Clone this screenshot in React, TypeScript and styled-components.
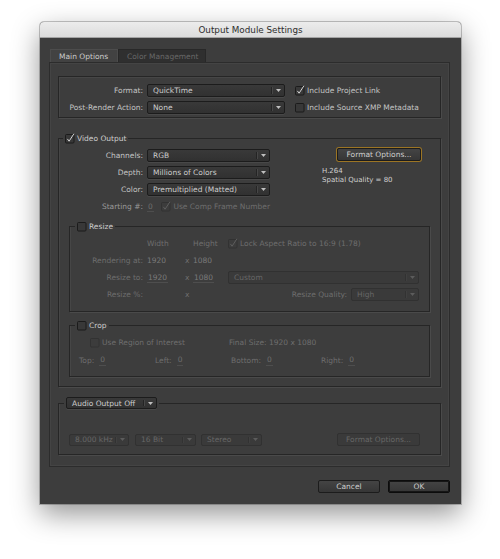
import React from 'react'
import styled, { createGlobalStyle } from 'styled-components'

const GlobalStyle = createGlobalStyle`
  html, body {
    margin: 0;
    padding: 0;
    background: #fff;
  }
  body {
    font-family: 'DejaVu Sans', 'Liberation Sans', sans-serif;
    font-size: 7.5px;
  }
`

const LABEL = '#c4c4c4'
const DIM = '#6e6e6e'

// ---------- small parts ----------

const CheckSvg = styled.svg`
  flex: none;
  display: block;
`

const CheckBox = ({ checked, disabled }: { checked?: boolean; disabled?: boolean }) => (
  <CheckSvg width="10" height="11" viewBox="0 0 10 11">
    <rect
      x="0.5"
      y="1.5"
      width="8.5"
      height="8.5"
      rx="1"
      fill={disabled ? '#3c3c3c' : '#383838'}
      stroke={disabled ? '#323232' : '#1b1b1b'}
    />
    {checked && (
      <path
        d="M2.4 5.9 L4.1 8.2 L8.9 0.8"
        fill="none"
        stroke={disabled ? '#5e5e5e' : '#d4d4d4'}
        strokeWidth="1"
      />
    )}
  </CheckSvg>
)

const CheckItem = styled.div<{ $disabled?: boolean; $width?: number }>`
  display: flex;
  align-items: center;
  gap: 2px;
  height: 13px;
  white-space: nowrap;
  color: ${p => (p.$disabled ? DIM : LABEL)};
  ${p => (p.$width ? `width: ${p.$width}px;` : '')}
`

const SelectBox = styled.div<{ $width: number; $height: number; $disabled?: boolean }>`
  display: flex;
  align-items: stretch;
  box-sizing: border-box;
  width: ${p => p.$width}px;
  height: ${p => p.$height}px;
  border: 1px solid ${p => (p.$disabled ? '#313131' : '#1c1c1c')};
  border-radius: 2px;
  background: ${p => (p.$disabled ? '#3a3a3a' : 'linear-gradient(#393939, #313131)')};
  color: ${p => (p.$disabled ? '#676767' : '#cdcdcd')};
  box-shadow: ${p => (p.$disabled ? 'none' : '0 1px 0 rgba(255,255,255,0.06)')};
`

const SelectText = styled.span`
  flex: 1;
  padding-left: 5px;
  display: flex;
  align-items: center;
  white-space: nowrap;
  overflow: hidden;
`

const SelectArrow = styled.span<{ $disabled?: boolean }>`
  flex: none;
  width: 12px;
  margin: 2px 0;
  display: flex;
  align-items: center;
  justify-content: center;
  border-left: 1px solid ${p => (p.$disabled ? '#323232' : '#242424')};
  box-shadow: inset 1px 0 0 ${p => (p.$disabled ? '#404040' : '#474747')};
`

type SelectProps = { value: string; width: number; height?: number; disabled?: boolean }

const Select = ({ value, width, height = 13, disabled }: SelectProps) => (
  <SelectBox $width={width} $height={height} $disabled={disabled}>
    <SelectText>{value}</SelectText>
    <SelectArrow $disabled={disabled}>
      <svg width="5" height="3" viewBox="0 0 5 3">
        <path d="M0 0h5L2.5 3z" fill={disabled ? '#5c5c5c' : '#c0c0c0'} />
      </svg>
    </SelectArrow>
  </SelectBox>
)

const Button = styled.div<{ $width: number; $focus?: boolean; $default?: boolean; $disabled?: boolean }>`
  box-sizing: border-box;
  width: ${p => p.$width}px;
  height: 13px;
  display: flex;
  align-items: center;
  justify-content: center;
  border: 1px solid ${p => (p.$default ? '#0c0c0c' : p.$disabled ? '#313131' : '#1c1c1c')};
  border-radius: 2px;
  background: ${p => (p.$disabled ? '#3a3a3a' : 'linear-gradient(#444, #363636)')};
  color: ${p => (p.$disabled ? '#676767' : '#cecece')};
  white-space: nowrap;
  box-shadow: ${p =>
    p.$focus
      ? '0 0 0 1px #9c7524'
      : p.$default
      ? 'inset 0 0 0 1px #161616'
      : 'none'};
`

const Value = styled.span<{ $underline?: boolean; $bright?: boolean }>`
  color: ${p => (p.$bright ? '#7a7a7a' : DIM)};
  ${p => (p.$underline ? 'border-bottom: 1px solid #4e4e4e; padding: 0 1px;' : '')}
  line-height: 10px;
`

// ---------- window ----------

const Page = styled.div`
  width: 500px;
  height: 559px;
  box-sizing: border-box;
  padding: 22px 0 0 40px;
  background: #fff;
  overflow: hidden;
`

const Dialog = styled.div`
  width: 421px;
  border-radius: 4px 4px 0 0;
  background: #3d3d3d;
  box-shadow: 0 10px 28px rgba(0, 0, 0, 0.42), 0 0 0 1px rgba(0, 0, 0, 0.22);
`

const TitleBar = styled.div`
  height: 16px;
  display: flex;
  align-items: center;
  justify-content: center;
  border-radius: 4px 4px 0 0;
  background: linear-gradient(#ececec, #dcdcdc);
  border-bottom: 1px solid #a4a4a4;
  box-sizing: border-box;
  color: #2e2e2e;
  font-size: 8.8px;
`

const Body = styled.div`
  padding: 11px 11px 11px 9px;
`

const TabRow = styled.div`
  display: flex;
  padding-left: 1px;
  height: 13px;
`

const Tab = styled.div<{ $active?: boolean; $width: number }>`
  box-sizing: border-box;
  width: ${p => p.$width}px;
  height: 13px;
  display: flex;
  align-items: center;
  padding-left: 8px;
  white-space: nowrap;
  color: ${p => (p.$active ? '#cccccc' : '#686868')};
  background: ${p => (p.$active ? '#424242' : '#2f2f2f')};
  border: 1px solid ${p => (p.$active ? '#4c4c4c' : '#282828')};
  border-bottom: none;
`

const TabPanel = styled.div`
  border: 1px solid #2c2c2c;
  box-shadow: inset 0 0 0 1px rgba(255, 255, 255, 0.04);
  padding: 13px 8px 11px;
`

const Box = styled.div`
  border: 1px solid #262626;
  box-shadow: 1px 1px 0 rgba(255, 255, 255, 0.07), inset 1px 1px 0 rgba(255, 255, 255, 0.05);
`

const FormatGrid = styled.div`
  display: grid;
  grid-template-columns: 88px 138px auto;
  grid-auto-rows: 13px;
  row-gap: 4px;
  align-items: center;
  padding: 7px 0 3px;
`

const Label = styled.span<{ $dim?: boolean; $color?: string }>`
  text-align: right;
  padding-right: 4px;
  white-space: nowrap;
  color: ${p => p.$color ?? (p.$dim ? DIM : LABEL)};
`

const CheckCell = styled.div`
  padding-left: 10px;
`

const Group = styled.fieldset<{ $mt: number; $mx?: number }>`
  margin: ${p => p.$mt}px ${p => p.$mx ?? 0}px 0;
  padding: 0;
  min-width: 0;
  border: 1px solid #262626;
  box-shadow: 1px 1px 0 rgba(255, 255, 255, 0.07), inset 1px 0 0 rgba(255, 255, 255, 0.05);
`

const Legend = styled.legend<{ $ml: number }>`
  margin-left: ${p => p.$ml}px;
  padding: 0 2px;
  height: 11px;
  display: flex;
  align-items: center;
  gap: 2px;
  color: #cdcdcd;
  white-space: nowrap;
`

const AudioLegend = styled.legend`
  margin-left: 5px;
  padding: 0 2px;
  height: 12px;
`

const VideoContent = styled.div`
  padding: 5px 0 9px;
`

const VideoTop = styled.div`
  display: flex;
`

const VideoGrid = styled.div`
  display: grid;
  grid-template-columns: 88px 123px;
  grid-auto-rows: 13px;
  row-gap: 4px;
  align-items: center;
`

const StartCell = styled.div`
  display: flex;
  align-items: center;
`

const StartValue = styled.div`
  width: 46px;
`

const InfoColumn = styled.div`
  margin-left: auto;
  margin-right: 19px;
  width: 99px;
  display: flex;
  flex-direction: column;
  align-items: flex-end;
`

const Info = styled.div`
  align-self: flex-start;
  margin-top: 6px;
  color: #d0d0d0;
  font-size: 7px;
  line-height: 9px;
  white-space: nowrap;
`

const ResizeGrid = styled.div`
  display: grid;
  grid-template-columns: 77px 38px 8px 35px 1fr;
  grid-auto-rows: 13px;
  row-gap: 4px;
  align-items: center;
  padding: 5px 10px 10px 0;
  color: ${DIM};
`

const RightCell = styled.div`
  display: flex;
  align-items: center;
  justify-content: flex-end;
  gap: 4px;
  color: ${DIM};
  white-space: nowrap;
`

const CropContent = styled.div`
  padding: 5px 0 9px 9px;
  display: flex;
  flex-direction: column;
  gap: 5px;
  color: ${DIM};
`

const CropRow = styled.div<{ $indent?: number }>`
  display: flex;
  align-items: center;
  height: 13px;
  padding-left: ${p => p.$indent ?? 0}px;
  white-space: nowrap;
`

const CropField = styled.div<{ $width?: number }>`
  display: flex;
  align-items: center;
  gap: 5px;
  ${p => (p.$width ? `width: ${p.$width}px;` : '')}
`

const AudioRow = styled.div`
  display: flex;
  align-items: center;
  padding: 24px 20px 8px 10px;
`

const AudioSelects = styled.div`
  display: flex;
  gap: 5px;
  & > :first-child {
    margin-right: 1px;
  }
`

const ButtonRow = styled.div`
  display: flex;
  justify-content: flex-end;
  gap: 8px;
  margin-top: 13px;
`

const Spacer = styled.div`
  flex: 1;
`

export default function App() {
  return (
    <Page>
      <GlobalStyle />
      <Dialog>
        <TitleBar>Output Module Settings</TitleBar>
        <Body>
          <TabRow>
            <Tab $active $width={68}>Main Options</Tab>
            <Tab $width={88}>Color Management</Tab>
          </TabRow>
          <TabPanel>
            <Box>
              <FormatGrid>
                <Label>Format:</Label>
                <Select value="QuickTime" width={138} />
                <CheckCell>
                  <CheckItem>
                    <CheckBox checked />
                    Include Project Link
                  </CheckItem>
                </CheckCell>
                <Label>Post-Render Action:</Label>
                <Select value="None" width={138} />
                <CheckCell>
                  <CheckItem>
                    <CheckBox />
                    Include Source XMP Metadata
                  </CheckItem>
                </CheckCell>
              </FormatGrid>
            </Box>

            <Group $mt={15}>
              <Legend $ml={4}>
                <CheckBox checked />
                Video Output
              </Legend>
              <VideoContent>
                <VideoTop>
                  <VideoGrid>
                    <Label>Channels:</Label>
                    <Select value="RGB" width={123} />
                    <Label>Depth:</Label>
                    <Select value="Millions of Colors" width={123} />
                    <Label>Color:</Label>
                    <Select value="Premultiplied (Matted)" width={123} />
                    <Label $color="#999999">Starting #:</Label>
                    <StartCell>
                      <StartValue>
                        <Value $underline>0</Value>
                      </StartValue>
                      <CheckItem $disabled>
                        <CheckBox checked disabled />
                        Use Comp Frame Number
                      </CheckItem>
                    </StartCell>
                  </VideoGrid>
                  <InfoColumn>
                    <Button $width={84} $focus style={{ marginTop: -1 }}>
                      Format Options...
                    </Button>
                    <Info>
                      H.264
                      <br />
                      Spatial Quality = 80
                    </Info>
                  </InfoColumn>
                </VideoTop>

                <Group $mt={8} $mx={10}>
                  <Legend $ml={5}>
                    <CheckBox />
                    Resize
                  </Legend>
                  <ResizeGrid>
                    <span />
                    <span>Width</span>
                    <span />
                    <span>Height</span>
                    <CheckItem $disabled>
                      <CheckBox checked disabled />
                      Lock Aspect Ratio to 16:9 (1.78)
                    </CheckItem>

                    <Label $dim>Rendering at:</Label>
                    <Value $bright>1920</Value>
                    <span>x</span>
                    <Value $bright>1080</Value>
                    <span />

                    <Label $dim>Resize to:</Label>
                    <span>
                      <Value $underline $bright>1920</Value>
                    </span>
                    <span>x</span>
                    <span>
                      <Value $underline $bright>1080</Value>
                    </span>
                    <Select value="Custom" width={191} disabled />

                    <Label $dim>Resize %:</Label>
                    <span />
                    <span>x</span>
                    <span />
                    <RightCell>
                      Resize Quality:
                      <Select value="High" width={68} disabled />
                    </RightCell>
                  </ResizeGrid>
                </Group>

                <Group $mt={8} $mx={10}>
                  <Legend $ml={5}>
                    <CheckBox />
                    Crop
                  </Legend>
                  <CropContent>
                    <CropRow $indent={11}>
                      <CheckItem $disabled $width={139}>
                        <CheckBox disabled />
                        Use Region of Interest
                      </CheckItem>
                      Final Size: 1920 x 1080
                    </CropRow>
                    <CropRow>
                      <CropField $width={76}>
                        Top: <Value $underline>0</Value>
                      </CropField>
                      <CropField $width={76}>
                        Left: <Value $underline>0</Value>
                      </CropField>
                      <CropField $width={90}>
                        Bottom: <Value $underline>0</Value>
                      </CropField>
                      <CropField>
                        Right: <Value $underline>0</Value>
                      </CropField>
                    </CropRow>
                  </CropContent>
                </Group>
              </VideoContent>
            </Group>

            <Group $mt={10}>
              <AudioLegend>
                <Select value="Audio Output Off" width={91} height={12} />
              </AudioLegend>
              <AudioRow>
                <AudioSelects>
                  <Select value="8.000 kHz" width={60} height={12} disabled />
                  <Select value="16 Bit" width={61} height={12} disabled />
                  <Select value="Stereo" width={61} height={12} disabled />
                </AudioSelects>
                <Spacer />
                <Button $width={83} $disabled>
                  Format Options...
                </Button>
              </AudioRow>
            </Group>
          </TabPanel>
          <ButtonRow>
            <Button $width={62}>Cancel</Button>
            <Button $width={62} $default>
              OK
            </Button>
          </ButtonRow>
        </Body>
      </Dialog>
    </Page>
  )
}
